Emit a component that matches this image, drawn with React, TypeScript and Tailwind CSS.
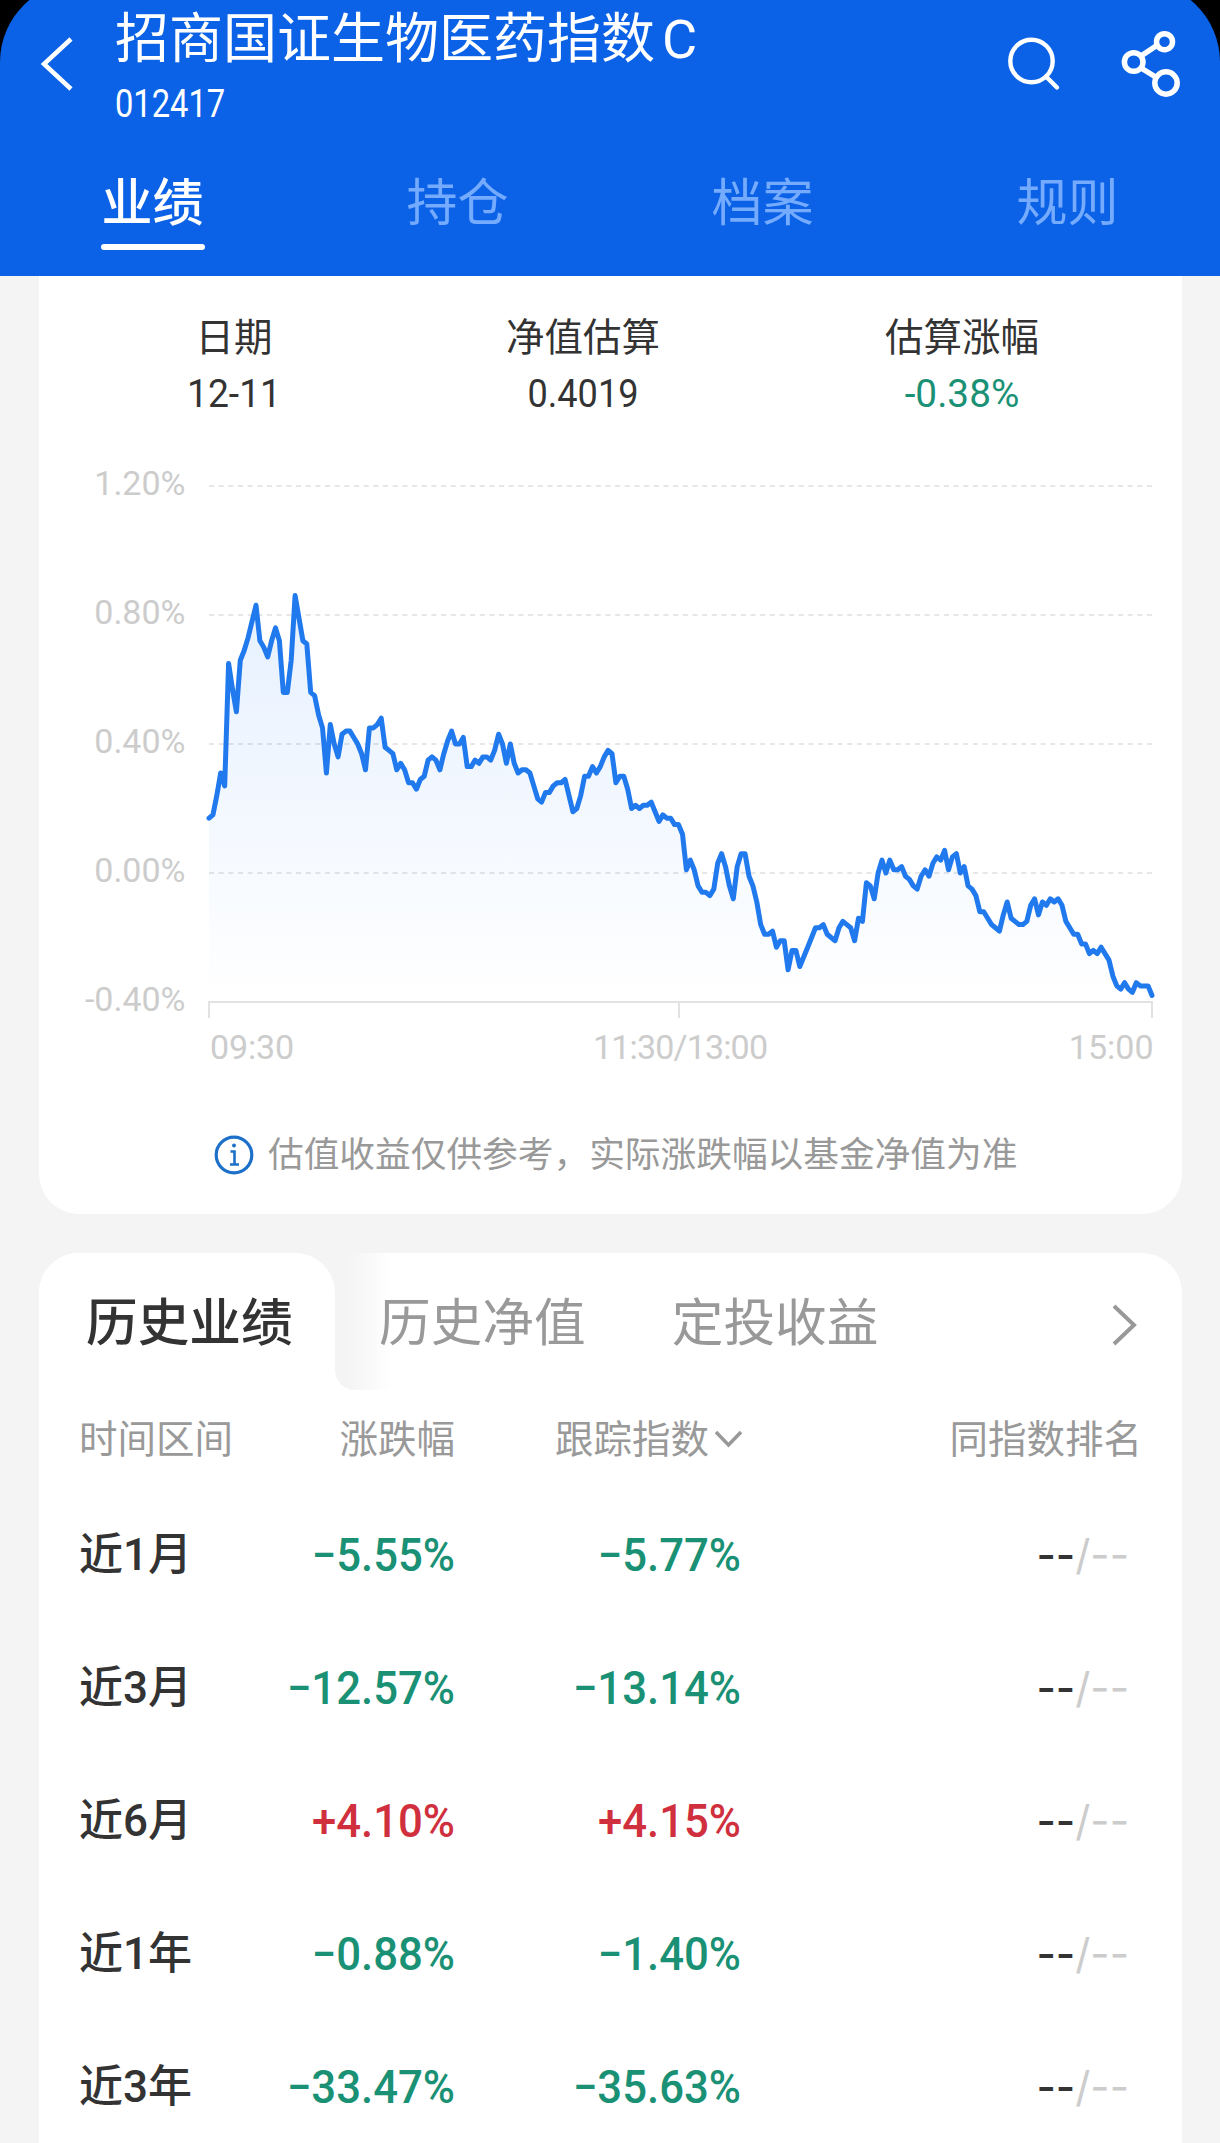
import React from 'react';

const navTabs = ['业绩', '持仓', '档案', '规则'];

const summary = [
  { label: '日期', value: '12-11', color: 'text-[#333] scale-x-[0.98]' },
  { label: '净值估算', value: '0.4019', color: 'text-[#333] scale-x-[0.95]' },
  { label: '估算涨幅', value: '-0.38%', color: 'text-[#1a9175] scale-x-[1.02]' },
];

const rows = [
  { period: '近1月', change: '−5.55%', index: '−5.77%' },
  { period: '近3月', change: '−12.57%', index: '−13.14%' },
  { period: '近6月', change: '+4.10%', index: '+4.15%' },
  { period: '近1年', change: '−0.88%', index: '−1.40%' },
  { period: '近3年', change: '−33.47%', index: '−35.63%' },
];

// intraday estimate, one point per minute, in 0.01%
const series = [
  17, 18, 24, 31, 27, 65, 57, 50, 66, 69, 73, 78, 83, 72, 70, 67, 72, 76, 72, 56,
  56, 66, 86, 79, 72, 71, 56, 55, 49, 45, 31, 46, 40, 36, 43, 44, 44, 42, 40, 37,
  32, 45, 45, 46, 48, 39, 38, 37, 32, 34, 32, 28, 28, 26, 29, 30, 35, 36, 35, 32,
  37, 41, 44, 40, 40, 42, 33, 33, 35, 34, 36, 36, 35, 38, 43, 40, 34, 40, 34, 31,
  32, 32, 31, 27, 23, 22, 25, 25, 27, 28, 28, 29, 24, 19, 20, 24, 30, 30, 33, 31,
  33, 36, 38, 37, 28, 30, 30, 26, 20, 21, 20, 21, 21, 22, 19, 16, 18, 17, 17, 15,
  15, 12, 1, 4, 1, -4, -6, -6, -7, -5, 3, 6, 2, -4, -8, 2, 6, 6, -1, -4,
  -9, -16, -19, -19, -18, -23, -21, -21, -30, -24, -24, -29, -26, -23, -20, -17, -17, -16, -19, -20,
  -21, -17, -15, -16, -17, -21, -14, -15, -3, -4, -8, 0, 4, 0, 4, 1, 1, 2, -1, -2,
  -4, -5, -1, 1, -1, 3, 5, 4, 7, 1, 5, 6, 0, 2, -4, -5, -7, -12, -12, -14,
  -16, -17, -18, -13, -9, -14, -15, -16, -16, -15, -10, -8, -13, -9, -10, -8, -9, -8, -10, -15,
  -17, -19, -19, -22, -22, -25, -24, -25, -23, -25, -27, -32, -35, -36, -34, -36, -37, -34, -35, -35,
  -35, -38,
];

const LEFT = 170;
const RIGHT = 1113;
const TOP = 36;
const STEP = 129;

const toY = (v: number) => TOP + ((120 - v) / 40) * STEP;

function EstimateChart() {
  const bottom = toY(-40);
  const dx = (RIGHT - LEFT) / (series.length - 1);
  const points = series.map((v, i) => `${(LEFT + i * dx).toFixed(1)},${toY(v).toFixed(1)}`).join(' ');

  return (
    <svg className="block font-[Roboto,sans-serif] text-[34px]" width="1143" height="640" viewBox="0 0 1143 640" aria-label="净值估算走势">
      <defs>
        <linearGradient id="area" x1="0" y1="140" x2="0" y2={bottom} gradientUnits="userSpaceOnUse">
          <stop offset="0" stopColor="#1677ff" stopOpacity="0.11" />
          <stop offset="1" stopColor="#1677ff" stopOpacity="0" />
        </linearGradient>
      </defs>
      {[120, 80, 40, 0, -40].map((v) => (
        <g key={v}>
          <text x="146.500" y={toY(v) + 9} textAnchor="end" fill="#ccc">{(v / 100).toFixed(2)}%</text>
          <line x1={LEFT} x2={RIGHT} y1={toY(v)} y2={toY(v)} stroke="#e6e6e6" strokeWidth="2" strokeDasharray="5 4.67" />
        </g>
      ))}
      <polygon points={`${LEFT},${bottom} ${points} ${RIGHT},${bottom}`} fill="url(#area)" />
      <path d={`M${LEFT} ${bottom + 16}V${bottom}H${RIGHT}V${bottom + 16}M640 ${bottom}V${bottom + 16}`} fill="none" stroke="#e2e2e2" strokeWidth="2" />
      <polyline points={points} fill="none" stroke="#2179ee" strokeWidth="5" strokeLinecap="round" strokeLinejoin="round" />
      <g fill="#ccc">
        <text x="171" y="609" textLength="84">09:30</text>
        <text x="554" y="609" textLength="175">11:30/13:00</text>
        <text x="1114.500" y="609" textAnchor="end">15:00</text>
      </g>
    </svg>
  );
}

function Header() {
  return (
    <header className="h-[276px] bg-black overflow-hidden text-white">
      <div className="-mt-[18px] h-[294px] rounded-t-[80px] bg-[#0b62e6] pt-[18px]">
        <div className="flex h-[150px]">
          <svg className="mt-[36px] ml-[38px] shrink-0" width="38" height="56" viewBox="0 0 38 56" fill="none" stroke="currentColor" strokeWidth="4.5" aria-hidden="true">
            <path d="M33 3L6 28L33 53" />
          </svg>
          <div className="ml-[39px] w-[860px]">
            <h1 className="mt-[13px] text-[54px] leading-[54px] font-normal whitespace-nowrap">
              招商国证生物医药指数<span className="ml-[7px]">C</span>
            </h1>
            <p className="mt-[18px] text-[38px] leading-[38px] origin-left scale-x-[0.86]">012417</p>
          </div>
          <svg className="mt-[30px] ml-[29px] shrink-0" width="64" height="64" viewBox="0 0 64 64" fill="none" stroke="currentColor" strokeWidth="4.4" aria-hidden="true">
            <circle cx="27.5" cy="31" r="21.2" />
            <path d="M42 46.500L53 57.500" strokeLinecap="round" />
          </svg>
          <svg className="mt-[26px] ml-[51px] shrink-0" width="70" height="76" viewBox="0 0 70 76" fill="none" stroke="currentColor" strokeWidth="5.500" aria-hidden="true">
            <circle cx="45.500" cy="15.700" r="8" />
            <circle cx="14.700" cy="36" r="9.300" />
            <circle cx="47" cy="57" r="11.200" />
            <path d="M22 30L38.500 19M22 42L37.500 51.500" />
          </svg>
        </div>
        <nav className="grid grid-cols-4">
          {navTabs.map((tab, i) => (
            <div key={tab} className="flex flex-col items-center pt-[28px]">
              <span className={i === 0 ? 'text-[51px] leading-[52px] font-medium' : 'text-[51px] leading-[52px] text-[#75abff]'}>{tab}</span>
              {i === 0 && <span className="mt-[14px] h-[6px] w-[104px] rounded-full bg-white" />}
            </div>
          ))}
        </nav>
      </div>
    </header>
  );
}

function HistoryCard() {
  return (
    <section className="mt-[39px] ml-[39px] w-[1143px] rounded-t-[40px] bg-white overflow-hidden">
      <div className="flex h-[137px] text-[51.700px] leading-[52px] text-[#999]">
        <div className="h-full w-[296px] bg-[linear-gradient(to_right,#fff_220px,#f4f4f4_220px)]">
          <div className="h-full rounded-tr-[40px] bg-white pt-[45px] pl-[47px] font-medium text-[#333]">历史业绩</div>
        </div>
        <div className="w-[58px] rounded-bl-[20px] bg-[linear-gradient(to_right,#f4f4f4_12px,#fff)]" />
        <div className="-ml-[14px] pt-[45px]">历史净值</div>
        <div className="ml-[86px] pt-[45px]">定投收益</div>
        <svg className="mt-[50px] ml-[230px]" width="32" height="44" viewBox="0 0 32 44" fill="none" stroke="#999" strokeWidth="4" aria-hidden="true">
          <path d="M5 3L25 22L5 41" />
        </svg>
      </div>
      <div className="grid grid-cols-[195px_181px_289px_398px] h-[98px] items-center pl-[40px] pt-[2px] text-[38.500px] leading-none text-[#999]">
        <span>时间区间</span>
        <span className="text-right">涨跌幅</span>
        <span className="flex items-center justify-end gap-[5px]">
          跟踪指数
          <svg className="-mt-[3px]" width="30" height="20" viewBox="0 0 30 20" fill="none" stroke="currentColor" strokeWidth="3.500" aria-hidden="true">
            <path d="M2 3L14.500 16L27 3" />
          </svg>
        </span>
        <span className="text-right">同指数排名</span>
      </div>
      {rows.map((row) => {
        const tone = row.change.startsWith('+') ? 'text-[#d0303e]' : 'text-[#1a9175]';
        return (
          <div key={row.period} className="grid grid-cols-[155px_221px_286px_388px] h-[133.200px] items-center pl-[40px] text-[44px] leading-none text-[#333]">
            <span className="font-medium">{row.period}</span>
            <span className={`${tone} text-right text-[46px] font-medium origin-right scale-x-[0.95]`}>{row.change}</span>
            <span className={`${tone} text-right text-[46px] font-medium origin-right scale-x-[0.95]`}>{row.index}</span>
            <span className="text-right font-[Inter,sans-serif] text-[42px]">
              <span className="font-medium">--</span>
              <span className="text-[#ccc]">/--</span>
            </span>
          </div>
        );
      })}
    </section>
  );
}

function App() {
  return (
    <div className="h-[2143px] w-[1220px] overflow-hidden bg-[#f4f4f4] font-[Roboto,'Noto_Sans_CJK_SC',sans-serif]">
      <Header />
      <section className="ml-[39px] h-[938px] w-[1143px] rounded-b-[40px] bg-white pt-[43px]">
        <div className="grid grid-cols-[348px_350px_408px] pl-[21px] text-center">
          {summary.map((item) => (
            <div key={item.label}>
              <div className="text-[38.500px] leading-[38px] text-[#333]">{item.label}</div>
              <div className={`${item.color} mt-[18px] text-[38px] leading-[38px]`}>{item.value}</div>
            </div>
          ))}
        </div>
        <div className="mt-[37px] h-[686px]">
          <EstimateChart />
        </div>
        <div className="-mt-px flex items-center pl-[175px] text-[35.700px] leading-[38px] text-[#999]">
          <svg className="mr-[14px]" width="40" height="40" viewBox="0 0 40 40" fill="none" stroke="#1d70c9" strokeWidth="3.200" aria-hidden="true">
            <circle cx="20" cy="20" r="17.800" />
            <path d="M16.500 16.500H20.500V29.500M16 29.500H25" strokeWidth="2.600" />
            <circle cx="20" cy="10.500" r="2" fill="#1d70c9" stroke="none" />
          </svg>
          估值收益仅供参考，实际涨跌幅以基金净值为准
        </div>
      </section>
      <HistoryCard />
    </div>
  );
}

export default App;
